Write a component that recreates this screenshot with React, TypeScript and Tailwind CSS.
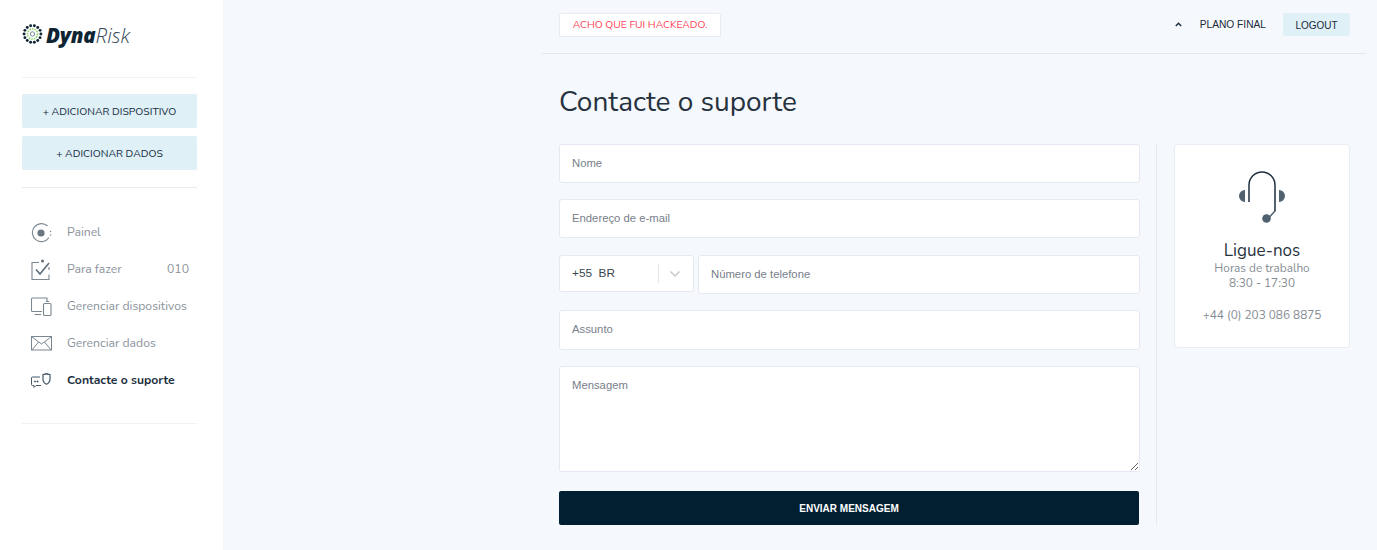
import React from "react";

const nunito = "font-['Nunito','Lato','Noto_Sans',sans-serif]";

function Logo() {
  const dots = Array.from({ length: 14 }, (_, i) => {
    const a = (i / 14) * Math.PI * 2;
    return <circle key={i} cx={10 + 8.4 * Math.cos(a)} cy={10 + 8.4 * Math.sin(a)} r={1.45} fill="#0f2433" />;
  });
  return (
    <svg width="21" height="20" viewBox="0 0 20 20" className="shrink-0">
      {dots}
      <circle cx="10" cy="10" r="5" fill="none" stroke="#7ccf5a" strokeWidth="1.5" strokeDasharray="1.4 1.1" />
      <circle cx="10" cy="10" r="2.2" fill="none" stroke="#5d7480" strokeWidth="0.8" />
    </svg>
  );
}

const stroke = "#7b8791";

function IconPanel() {
  return (
    <svg width="22" height="20" viewBox="0 0 22 20" fill="none">
      <path d="M18 14.5A9 9 0 1 1 16.5 3" stroke={stroke} strokeWidth="1.1" />
      <circle cx="10" cy="10" r="3.6" fill="#6b7883" />
      <circle cx="19.6" cy="8.5" r="0.7" fill={stroke} />
      <circle cx="19.6" cy="12" r="0.7" fill={stroke} />
    </svg>
  );
}
function IconTodo() {
  return (
    <svg width="20" height="22" viewBox="0 0 20 22" fill="none">
      <path d="M8 3.5H1v17h17v-5M18 11V8" stroke={stroke} strokeWidth="1.1" />
      <path d="M5 10.5l4 4.5 9-11" stroke="#5f6d78" strokeWidth="1.6" />
      <circle cx="11.5" cy="2" r="1.5" fill="#5f6d78" />
    </svg>
  );
}
function IconDevices() {
  return (
    <svg width="21" height="19" viewBox="0 0 21 19" fill="none" stroke={stroke} strokeWidth="1.1">
      <path d="M16 4V1H1.5a1 1 0 0 0-1 1v11.500a1 1 0 0 0 1 1H11" />
      <path d="M3.500 17.500H10" />
      <rect x="12.500" y="6.500" width="7.500" height="12" rx="1" />
      <path d="M15 4.500h3" />
    </svg>
  );
}
function IconMail() {
  return (
    <svg width="21" height="15" viewBox="0 0 21 15" fill="none" stroke={stroke} strokeWidth="1">
      <rect x="0.500" y="0.500" width="20" height="13.500" />
      <path d="M1 1l9.500 7L20 1M1 14l6.500-8M20 14l-6.500-8" />
    </svg>
  );
}
function IconSupport() {
  return (
    <svg width="21" height="15" viewBox="0 0 21 15" fill="none" stroke="#45596a" strokeWidth="1">
      <path d="M9 4H1.500a1 1 0 0 0-1 1v6.500a1 1 0 0 0 1 1H3V14.500l2-2h5" />
      <path d="M12 1.500c1.500 0 3-.5 3.500-1 .5.5 2 1 3.500 1V6c0 3-1.800 4.500-3.500 5.300C13.800 10.500 12 9 12 6z" strokeWidth="1.200" />
      <circle cx="4" cy="8.500" r=".6" fill="#45596a" />
      <circle cx="6.500" cy="8.500" r=".6" fill="#45596a" />
    </svg>
  );
}
function IconHeadset() {
  return (
    <svg width="48" height="54" viewBox="0 0 48 54" fill="none">
      <path d="M11 32V15a13 13 0 0 1 26 0v26" stroke="#1f3040" strokeWidth="1.500" />
      <path d="M37 26v15l-5.500 6" stroke="#50626f" strokeWidth="1.500" />
      <path d="M7 20v12a6 6 0 0 1 0-12zM41 20v12a6 6 0 0 0 0-12z" fill="#50626f" />
      <circle cx="28.500" cy="48.500" r="4.300" fill="#50626f" />
    </svg>
  );
}

const navItems: { label: string; icon: React.ReactNode; count?: string; active?: boolean }[] = [
  { label: "Painel", icon: <IconPanel /> },
  { label: "Para fazer", icon: <IconTodo />, count: "010" },
  { label: "Gerenciar dispositivos", icon: <IconDevices /> },
  { label: "Gerenciar dados", icon: <IconMail /> },
  { label: "Contacte o suporte", icon: <IconSupport />, active: true },
];

const fieldBox =
  "w-full bg-white border border-[#e5e9f2] rounded-[3px] pl-3 pr-3 pb-[2px] outline-none text-[11.300px] font-['Liberation_Sans',sans-serif] placeholder:text-[#78808a]";

export default function App() {
  return (
    <div className={`flex h-[550px] w-full overflow-hidden bg-[#f5f8fc] ${nunito}`}>
      <aside className="w-[223px] shrink-0 bg-white pl-[22px] pr-[26px] flex flex-col">
        <div className="h-[78px] border-b border-[#f1f2f4] flex items-start pt-[24px] gap-[3px] pb-0">
          <Logo />
          <span className="text-[20.500px] leading-[22px] text-[#0f2433] italic font-black font-['Open_Sans',sans-serif] tracking-[-0.2px]">
            Dyna<span className="font-light text-[#33475a] tracking-normal">Risk</span>
          </span>
        </div>
        <div className="pt-[16px] pb-[17px] border-b border-[#e8eaec] flex flex-col gap-2">
          <button className="h-[34px] pt-[1px] rounded-[2px] bg-[#dff0f7] text-[10.400px] text-[#132a3b]">+ ADICIONAR DISPOSITIVO</button>
          <button className="h-[34px] pt-[2px] rounded-[2px] bg-[#dff0f7] text-[10.400px] text-[#132a3b]">+ ADICIONAR DADOS</button>
        </div>
        <nav className="pt-[26px] pb-[24px] border-b border-[#eff1f3] flex flex-col">
          {navItems.map((item) => (
            <div key={item.label} className="h-[37px] flex items-center">
              <span className="w-[45px] pl-[9px] flex items-center justify-start shrink-0">{item.icon}</span>
              <span className={`text-[12.200px] ${item.active ? "font-bold text-[#1d3040]" : "text-[#8a929a]"}`}>{item.label}</span>
              {item.count && <span className="ml-auto mr-2 text-[12.200px] text-[#8a929a]">{item.count}</span>}
            </div>
          ))}
        </nav>
      </aside>

      <main className="flex-1 pl-[319px] pr-[11px]">
        <header className="h-[54px] border-b border-[#e1e6f0] pl-[17px] pr-[16px] flex items-start pt-[13px]">
          <button className="h-[24px] w-[162px] pt-[1px] bg-white border border-[#e7ebf3] rounded-[2px] text-[10.300px] text-[#fb4054]">ACHO QUE FUI HACKEADO.</button>
          <svg width="7" height="5" viewBox="0 0 7 5" className="ml-auto mt-[9px]" fill="none" stroke="#1b2f3f" strokeWidth="1.500">
            <path d="M.8 4L3.500 1.300 6.200 4" />
          </svg>
          <span className="ml-[18px] mt-[5px] text-[10.200px] leading-[13px] text-[#1b2b38] font-['Liberation_Sans',sans-serif]">PLANO FINAL</span>
          <button className="ml-[17px] h-[23px] w-[67px] pt-[1px] rounded-[2px] bg-[#dff0f7] text-[10px] text-[#1b2b38] font-['Liberation_Sans',sans-serif]">LOGOUT</button>
        </header>

        <div className="pl-[17px] pr-[16px]">
          <h1 className="h-[90px] pt-[30px] text-[28px] leading-[36px] text-[#26323e] font-normal">Contacte o suporte</h1>

          <div className="flex items-start">
            <form className="w-[581px] shrink-0 flex flex-col">
              <input placeholder="Nome" className={`${fieldBox} h-[39px] mb-[16px]`} />
              <input placeholder="Endereço de e-mail" className={`${fieldBox} h-[39px] mb-[17px]`} />
              <div className="flex items-start gap-[4px] mb-[16px]">
                <div className="w-[135px] h-[37px] shrink-0 bg-white border border-[#e5e9f2] rounded-[3px] flex items-center pl-3 text-[11.800px] text-[#3a444e] font-['Liberation_Sans',sans-serif]">
                  <span className="whitespace-pre flex-1">+55  BR</span>
                  <span className="w-px h-[19px] bg-[#e3e5e8]" />
                  <svg width="34" height="10" viewBox="0 0 34 10" fill="none" stroke="#c5c8cc" strokeWidth="1.500">
                    <path d="M11.500 2.500l4.500 4.500 4.500-4.500" />
                  </svg>
                </div>
                <input placeholder="Número de telefone" className={`${fieldBox} h-[39px]`} />
              </div>
              <input placeholder="Assunto" className={`${fieldBox} h-[40px] mb-[16px]`} />
              <textarea placeholder="Mensagem" className={`${fieldBox} h-[106px] pt-[10px] block mb-[19px]`} />
              <button type="button" className="h-[34px] w-[580px] rounded-[2px] bg-[#011f31] text-white text-[10px] font-bold font-['Liberation_Sans',sans-serif]">ENVIAR MENSAGEM</button>
            </form>

            <div className="ml-[16px] w-px h-[381px] bg-[#e6e9ef] shrink-0" />

            <div className="ml-[17px] flex-1 h-[204px] bg-white border border-[#e9edf4] rounded-[4px] flex flex-col items-center pt-[25px]">
              <IconHeadset />
              <div className="mt-[17px] text-[17px] leading-[20px] text-[#28333e]">Ligue-nos</div>
              <div className="text-[11.800px] leading-[15px] text-[#858c94]">Horas de trabalho</div>
              <div className="text-[11.800px] leading-[15px] text-[#858c94]">8:30 - 17:30</div>
              <div className="mt-[17px] text-[11.800px] leading-[15px] text-[#858c94]">+44 (0) 203 086 8875</div>
            </div>
          </div>
        </div>
      </main>
    </div>
  );
}
